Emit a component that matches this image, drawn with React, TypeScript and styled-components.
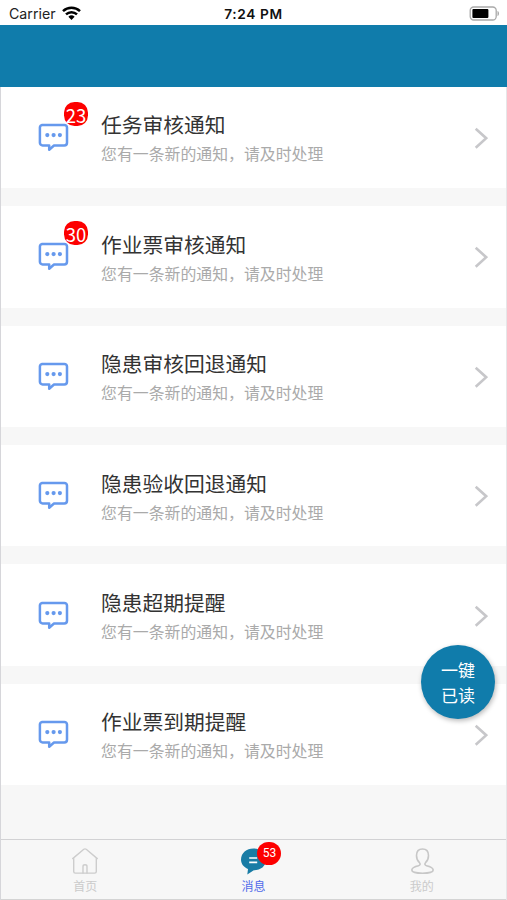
import React from 'react';
import styled, { createGlobalStyle } from 'styled-components';

const GlobalStyle = createGlobalStyle`
  * { box-sizing: border-box; }
  body {
    margin: 0;
    background: #f7f7f7;
    font-family: "Noto Sans CJK SC", sans-serif;
  }
`;

const Screen = styled.div`
  position: relative;
  display: flex;
  flex-direction: column;
  width: 507px;
  height: 900px;
  overflow: hidden;
  background: #f7f7f7;
`;

const StatusBar = styled.header`
  display: grid;
  grid-template-columns: 1fr auto 1fr;
  align-items: center;
  flex: none;
  height: 25.4px;
  padding: 2px 7px 0 9px;
  background: #fff;
  color: #222;
  font: 14.2px/20px Inter, sans-serif;
`;

const Carrier = styled.div`
  display: flex;
  align-items: center;
  gap: 6px;
`;

const Clock = styled.time`
  margin-left: -2px;
  color: #111;
  font-size: 13.7px;
  font-weight: 600;
  letter-spacing: 0.6px;
`;

const BatteryIcon = styled.svg`
  justify-self: end;
`;

const TitleBar = styled.div`
  flex: none;
  height: 61.4px;
  background: #107cab;
`;

const Body = styled.div`
  display: flex;
  flex: 1;
  flex-direction: column;
  min-height: 0;
  border-left: 1px solid #d6d6da;
  border-right: 1px solid #e6e6e8;
`;

const List = styled.main`
  display: flex;
  flex: 1;
  flex-direction: column;
  gap: 18px;
`;

const Row = styled.article`
  display: flex;
  flex: none;
  align-items: center;
  height: 101.4px;
  padding: 1px 18px 0 36px;
  background: #fff;
`;

const IconBox = styled.div`
  position: relative;
  flex: none;
  width: 64px;
  height: 32px;
  svg { display: block; }
`;

const Badge = styled.span`
  position: absolute;
  left: 27px;
  top: -20px;
  width: 24px;
  height: 24px;
  border-radius: 10.5px;
  background: #fd0000;
  color: #fff;
  font-size: 18.5px;
  line-height: 27px;
  text-align: center;
`;

const Copy = styled.div`
  flex: 1;
  padding-top: 2px;
  white-space: nowrap;
`;

const Title = styled.h2`
  margin: 0;
  color: #333;
  font-size: 20.75px;
  font-weight: 400;
  line-height: 30px;
`;

const Detail = styled.p`
  margin: 0;
  color: #aaa;
  font-size: 15.88px;
  line-height: 29px;
`;

const ReadAll = styled.button`
  position: absolute;
  left: 421px;
  top: 645px;
  width: 74px;
  height: 74px;
  padding: 0;
  border: 0;
  border-radius: 50%;
  background: #107cab;
  box-shadow: 1px 2px 5px rgba(0, 0, 0, 0.28);
  color: #fff;
  font: 17px/25px "Noto Sans CJK SC", sans-serif;
`;

const TabBar = styled.nav`
  display: grid;
  grid-template-columns: repeat(3, 1fr);
  flex: none;
  height: 61.5px;
  border-top: 1px solid #d2d2d4;
  border-bottom: 1px solid #d4d4d4;
`;

const Tab = styled.a<{ $active?: boolean }>`
  display: flex;
  flex-direction: column;
  align-items: center;
  padding-top: 7px;
  color: ${(p) => (p.$active ? '#526bea' : '#cbcbcb')};
  font-size: 12px;
  line-height: 18px;
`;

const TabIcon = styled.div`
  position: relative;
  height: 30px;
  svg { display: block; }
`;

const TabBadge = styled.span`
  position: absolute;
  left: 17px;
  top: -5px;
  width: 24px;
  height: 23px;
  border-radius: 12px;
  background: #fd0000;
  color: #fff;
  font: 12px/23px Roboto, sans-serif;
  text-align: center;
`;

const WifiIcon = () => (
  <svg width="19" height="15" viewBox="0 0 19 15">
    <g fill="none" stroke="#000" strokeWidth="2.5">
      <path d="M1 5.1a12.4 12.4 0 0 1 17 0" />
      <path d="M4 8.4a8 8 0 0 1 11 0" />
    </g>
    <path d="M6.4 10.8a4.5 4.5 0 0 1 6.2 0L9.5 14z" />
  </svg>
);

const MessageIcon = () => (
  <svg width="32" height="32" viewBox="0 0 32 32">
    <path
      d="M5 2.9h22.3a2.7 2.7 0 0 1 2.7 2.7v15.2a2.7 2.7 0 0 1-2.7 2.7H17l-4.8 4.2v-4.2H5.6a2.7 2.7 0 0 1-2.7-2.7V5.6A2.7 2.7 0 0 1 5.6 2.9z"
      fill="none" stroke="#6699ed" strokeWidth="2.5" strokeLinejoin="round"
    />
    <g fill="#6699ed">
      <circle cx="10.3" cy="13.1" r="2.1" />
      <circle cx="16.6" cy="13.1" r="2.1" />
      <circle cx="22.9" cy="13.1" r="2.1" />
    </g>
  </svg>
);

const Chevron = () => (
  <svg width="14" height="22" viewBox="0 0 14 22">
    <path d="M1.7 1.7 12.2 11.2 1.7 20.7" fill="none" stroke="#c7c7ca" strokeWidth="2.6" />
  </svg>
);

const HomeIcon = () => (
  <svg width="28" height="28" viewBox="0 0 28 28">
    <g fill="none" stroke="#cdcdcd" strokeWidth="1.4" strokeLinejoin="round" strokeLinecap="round">
      <path d="M1.7 11.6 12.8 2.3q1.2-.9 2.4 0L26.3 11.6M2.7 11v13.5q0 1.6 1.6 1.6h19.4q1.6 0 1.6-1.6V11" />
      <path d="M12 26v-6.5q0-1.7 2-1.7t2 1.7V26" />
    </g>
  </svg>
);

const ChatIcon = () => (
  <svg width="26" height="28" viewBox="0 0 26 28">
    <path d="M13.5 1.5C6.5 1.5 1 6 1 12.5c0 4.3 2.7 7.7 7 9.5L7.3 27.5l6.5-4.2C20.5 23.3 26 19.3 26 12.5 26 6 20.5 1.5 13.5 1.5z" fill="#197ca5" />
    <path d="M9.2 11h8M9.2 15.3h8" stroke="#fff" strokeWidth="1.7" />
  </svg>
);

const PersonIcon = () => (
  <svg width="24" height="28" viewBox="0 0 24 28">
    <path
      d="M12.5 2C8.3 2 6.5 5 6.5 8.5c0 3.6 1.4 5.8 3 7.2 1.1 1.2.6 2.7-1 3-3.7.8-6.3 1.7-6.6 4-.3 2.5 3.9 3.5 10.6 3.5s10.9-1 10.6-3.5c-.3-2.3-2.9-3.2-6.6-4-1.6-.3-2.1-1.8-1-3 1.6-1.4 3-3.6 3-7.2C18.5 5 16.7 2 12.5 2z"
      fill="none" stroke="#c7c7c7" strokeWidth="1.6"
    />
  </svg>
);

const notices = [
  { title: '任务审核通知', count: 23 },
  { title: '作业票审核通知', count: 30 },
  { title: '隐患审核回退通知' },
  { title: '隐患验收回退通知' },
  { title: '隐患超期提醒' },
  { title: '作业票到期提醒' },
];

export default function App() {
  return (
    <Screen>
      <GlobalStyle />
      <StatusBar>
        <Carrier>Carrier <WifiIcon /></Carrier>
        <Clock>7:24 PM</Clock>
        <BatteryIcon width="31" height="16" viewBox="0 0 31 16">
          <rect x="1.2" y="1" width="26" height="13" rx="3.5" fill="none" stroke="#a9a9a9" strokeWidth="1.3" />
          <rect x="3.4" y="3" width="16" height="9" rx="1" fill="#000" />
          <path d="M28.5 5c2 .6 2 4.4 0 5z" fill="#a9a9a9" />
        </BatteryIcon>
      </StatusBar>
      <TitleBar />
      <Body>
        <List>
          {notices.map((n) => (
            <Row key={n.title}>
              <IconBox>
                <MessageIcon />
                {n.count && <Badge>{n.count}</Badge>}
              </IconBox>
              <Copy>
                <Title>{n.title}</Title>
                <Detail>您有一条新的通知，请及时处理</Detail>
              </Copy>
              <Chevron />
            </Row>
          ))}
        </List>
        <TabBar>
          <Tab><TabIcon><HomeIcon /></TabIcon>首页</Tab>
          <Tab $active><TabIcon><ChatIcon /><TabBadge>53</TabBadge></TabIcon>消息</Tab>
          <Tab><TabIcon><PersonIcon /></TabIcon>我的</Tab>
        </TabBar>
      </Body>
      <ReadAll>一键<br />已读</ReadAll>
    </Screen>
  );
}
